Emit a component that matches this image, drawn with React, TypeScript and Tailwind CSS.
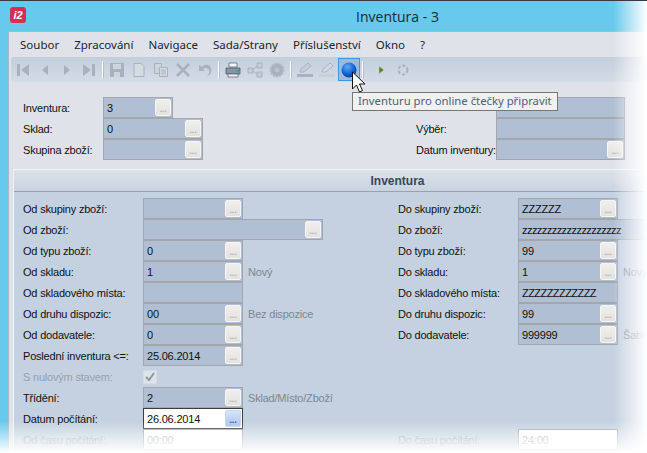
const menu = ["Soubor", "Zpracování", "Navigace", "Sada/Strany", "Příslušenství", "Okno", "?"];

type FieldProps = {
  value?: string;
  width: number;
  button?: boolean;
  white?: boolean;
  focused?: boolean;
  tight?: boolean;
};

function Field({ value = "", width, button = true, white, focused, tight }: FieldProps) {
  const fill = white ? "bg-white" : "bg-[#b0bfd3]";
  const edge = focused ? "border-[#3c3c3c]" : "border-[#a3a7ab]";
  return (
    <div style={{ width }} className={`flex h-[21px] shrink-0 border ${edge} ${fill}`}>
      <span className={`flex-1 overflow-hidden whitespace-nowrap pl-[3px] leading-[20px] ${tight ? "tracking-[-0.55px]" : ""} ${white && !focused ? "text-[#a9b0b9]" : "text-[#111]"}`}>
        {value}
      </span>
      {button && (
        <span
          className={`m-px flex w-[16px] items-end justify-center rounded-[2px] border pb-[1px] text-[9px] font-bold leading-[10px] ${
            focused
              ? "border-[#c6d5f0] bg-linear-to-b from-[#d8e4f8] to-[#a9c3ee] text-[#2a4f9a]"
              : "border-[#f6f6f4] bg-linear-to-b from-[#f0efed] to-[#e4e2de] text-[#b4b4b2]"
          }`}
        >
          ...
        </span>
      )}
    </div>
  );
}

type RowProps = FieldProps & {
  label?: string;
  labelWidth: number;
  note?: string;
  muted?: boolean;
};

function Row({ label, labelWidth, note, muted, ...field }: RowProps) {
  return (
    <div className="flex h-[21px] items-center">
      <span style={{ width: labelWidth }} className={`shrink-0 whitespace-nowrap pt-[2px] ${muted ? "text-[#97a1ad]" : "text-[#111]"}`}>
        {label}
      </span>
      <Field {...field} />
      {note && <span className="ml-[5px] whitespace-nowrap pt-[2px] text-[#7f8791]">{note}</span>}
    </div>
  );
}

function Sep() {
  return <span className="mx-[2px] h-[18px] w-[2px] shrink-0 border-l border-white bg-[#b7c1cd]" />;
}

function Tool({ children, active }: { children?: React.ReactNode; active?: boolean }) {
  return (
    <span
      className={`flex h-[23px] w-[22px] shrink-0 items-center justify-center ${
        active ? "border border-[#3d95e6] bg-[#9fb9d6]" : ""
      }`}
    >
      {children}
    </span>
  );
}

const g = "#a8b1bc";

function Icon({ children }: { children: React.ReactNode }) {
  return (
    <svg width="16" height="16" viewBox="0 0 16 16" fill="none">
      {children}
    </svg>
  );
}

const toolbar = (
  <>
    <Tool><Icon><path d="M2 2h3v12H2zM14 2v12L6 8z" fill={g} /></Icon></Tool>
    <Tool><Icon><path d="M11 3v10L5 8z" fill={g} /></Icon></Tool>
    <Tool><Icon><path d="M5 3v10l6-5z" fill={g} /></Icon></Tool>
    <Tool><Icon><path d="M11 2h3v12h-3zM2 2v12l8-6z" fill={g} /></Icon></Tool>
    <Sep />
    <Tool><Icon><path d="M1 1h14v14H1z" fill={g} /><path d="M4 2h8v5H4z" fill="#cdd4dc" /><path d="M5 10h6v5H5z" fill="#cdd4dc" /></Icon></Tool>
    <Tool><Icon><path d="M3 1.500h7l3 3v10H3z" fill="#d5dbe2" stroke={g} /></Icon></Tool>
    <Tool><Icon><path d="M1.500 1.500h7v10h-7z" fill="#cdd4dc" stroke={g} /><path d="M6.500 5.500h8v9h-8z" fill="#d5dbe2" stroke={g} /><path d="M8 8h5M8 10h5M8 12h5" stroke={g} /></Icon></Tool>
    <Tool><Icon><path d="M2 2l12 12M14 2L2 14" stroke={g} strokeWidth="2.500" /></Icon></Tool>
    <Tool><Icon><path d="M2 3v6h6L6 7c2-2 5-1 6 1 1 2 0 4-2 6 4-1 5-5 4-8-2-4-6-4-9-1z" fill={g} /></Icon></Tool>
    <Sep />
    <Tool>
      <Icon>
        <path d="M4 1h8v4H4z" fill="#f4f6f8" stroke="#5d6a78" strokeWidth="0.800" />
        <path d="M1 6h14v6H1z" fill="#8895a5" stroke="#4d5a68" strokeWidth="0.800" />
        <path d="M3 12h10v3H3z" fill="#eef1f4" stroke="#5d6a78" strokeWidth="0.800" />
        <path d="M11 8h3v2h-3z" fill="#22c04a" />
      </Icon>
    </Tool>
    <Tool>
      <Icon>
        <path d="M1 6h5v5H1zM10 1h5v5h-5zM10 10h5v5h-5z" fill="#c5ccd5" stroke={g} />
        <path d="M6 8l4-4M6 9l4 3" stroke={g} />
      </Icon>
    </Tool>
    <Tool>
      <Icon>
        <circle cx="8" cy="8" r="6.500" fill={g} stroke="#b3bbc6" strokeWidth="2" strokeDasharray="2 1" />
        <circle cx="8" cy="8" r="2.500" fill="#b9c1cb" />
      </Icon>
    </Tool>
    <Sep />
    <Tool>
      <Icon>
        <path d="M0 12h16v3H0z" fill={g} />
        <path d="M3 10l1-3 7-6 3 3-7 6z" fill="#c7ced7" stroke={g} />
      </Icon>
    </Tool>
    <Tool>
      <Icon>
        <path d="M0 12h16v3H0z" fill="#c8d0da" />
        <path d="M3 10l1-3 7-6 3 3-7 6z" fill="#d3d9e0" stroke={g} />
      </Icon>
    </Tool>
    <Tool active>
      <svg width="16" height="16" viewBox="0 0 16 16">
        <defs>
          <radialGradient id="ball" cx="0.400" cy="0.300" r="0.800">
            <stop offset="0" stopColor="#5ea9f5" />
            <stop offset="0.600" stopColor="#0f5fd0" />
            <stop offset="1" stopColor="#0a2f80" />
          </radialGradient>
        </defs>
        <circle cx="8" cy="8" r="7.500" fill="url(#ball)" />
      </svg>
    </Tool>
    <Sep />
    <span className="w-[4px] shrink-0" />
    <Tool><Icon><path d="M6 4v8l5-4z" fill="#55803a" stroke="#c2d6ac" strokeWidth="0.600" /></Icon></Tool>
    <Tool>
      <Icon>
        <circle cx="8" cy="8" r="4.500" stroke={g} strokeWidth="2" strokeDasharray="3 2" />
      </Icon>
    </Tool>
  </>
);

export default function App() {
  return (
    <div className="relative h-[453px] w-[647px] overflow-hidden border-t border-[#353b40] bg-[#67c9ec] font-['Liberation_Sans',sans-serif] text-[11px] tracking-[-0.2px]">
      {/* Title bar */}
      <div className="relative flex h-[30px] items-center justify-center pl-[148px] tracking-normal">
        <span className="absolute left-[10px] top-[6px] flex h-[16px] w-[16px] items-center justify-center rounded-[3px] bg-[#d4304f] text-[11px] font-bold italic leading-none text-white">
          i2
        </span>
        <span className="font-['Open_Sans',sans-serif] text-[14px] text-[#1b2a33]">Inventura - 3</span>
      </div>

      {/* Window client */}
      <div className="ml-[8px] h-[422px] border-t border-l border-[#a9b8c6] bg-[#dfe3e9]">
        <div className="flex h-[25px] items-center gap-[15px] pl-[11px] font-['Noto_Sans',sans-serif] text-[11.5px] tracking-normal text-[#1a2330]">
          {menu.map((m) => (
            <span key={m}>{m}</span>
          ))}
        </div>

        <div className="ml-[2px] flex h-[25px] items-center rounded-[3px] bg-linear-to-b from-[#c3cedc] to-[#d4dce5] pl-px">
          {toolbar}
        </div>

        {/* Document header */}
        <div className="flex pl-[14px] pt-[15px]">
          <div className="w-[393px]">
            <Row label="Inventura:" labelWidth={80} value="3" width={70} />
            <Row label="Sklad:" labelWidth={80} value="0" width={100} />
            <Row label="Skupina zboží:" labelWidth={80} width={100} />
          </div>
          <div>
            <Row labelWidth={80} width={129} button={false} />
            <Row label="Výběr:" labelWidth={80} width={129} button={false} />
            <Row label="Datum inventury:" labelWidth={80} width={129} />
          </div>
        </div>

        {/* Inventura group */}
        <div className="ml-[4px] mt-[9px] w-[700px] border-l border-t border-[#f0f3f6] bg-[#c4d1e0] pb-[40px]">
          <div className="flex h-[22px] items-center justify-center border-b border-[#98a2ad] bg-linear-to-b from-[#dce2ea] to-[#c9d3e0] pl-[68px] text-[12px] font-bold tracking-normal text-[#39475a]">
            Inventura
          </div>
          <div className="flex pl-[9px] pt-[6px]">
            <div className="w-[375px]">
              <Row label="Od skupiny zboží:" labelWidth={120} width={100} />
              <Row label="Od zboží:" labelWidth={120} width={180} />
              <Row label="Od typu zboží:" labelWidth={120} value="0" width={100} />
              <Row label="Od skladu:" labelWidth={120} value="1" width={100} note="Nový" />
              <Row label="Od skladového místa:" labelWidth={120} width={100} button={false} />
              <Row label="Od druhu dispozic:" labelWidth={120} value="00" width={100} note="Bez dispozice" />
              <Row label="Od dodavatele:" labelWidth={120} value="0" width={100} />
              <Row label="Poslední inventura <=:" labelWidth={120} value="25.06.2014" width={100} />
              <div className="flex h-[21px] items-center">
                <span className="w-[120px] pt-[2px] text-[#97a1ad]">S nulovým stavem:</span>
                <span className="flex h-[14px] w-[14px] items-center justify-center border border-[#d5dbe2] bg-[#dde3ea]">
                  <svg width="12" height="12" viewBox="0 0 12 12" fill="none">
                    <path d="M2 6l3 3 5-7" stroke="#8f979f" strokeWidth="2" />
                  </svg>
                </span>
              </div>
              <Row label="Třídění:" labelWidth={120} value="2" width={100} note="Sklad/Místo/Zboží" />
              <Row label="Datum počítání:" labelWidth={120} value="26.06.2014" width={100} white focused />
              <Row label="Od času počítání:" labelWidth={120} value="00:00" width={100} white button={false} muted />
            </div>
            <div>
              <Row label="Do skupiny zboží:" labelWidth={120} value="ZZZZZZ" width={100} />
              <Row label="Do zboží:" labelWidth={120} value="zzzzzzzzzzzzzzzzzzzz" width={180} tight />
              <Row label="Do typu zboží:" labelWidth={120} value="99" width={100} />
              <Row label="Do skladu:" labelWidth={120} value="1" width={100} note="Nový" />
              <Row label="Do skladového místa:" labelWidth={120} value="ZZZZZZZZZZZZ" width={100} button={false} tight />
              <Row label="Do druhu dispozic:" labelWidth={120} value="99" width={100} />
              <Row label="Do dodavatele:" labelWidth={120} value="999999" width={100} note="Šablona" />
              <div className="h-[84px]" />
              <Row label="Do času počítání:" labelWidth={120} value="24:00" width={100} white button={false} muted />
            </div>
          </div>
        </div>
      </div>

      {/* Torn screenshot edges */}
      <div className="absolute inset-y-0 right-0 w-[34px] bg-linear-to-r from-transparent to-white" />
      <div className="absolute inset-x-0 bottom-0 h-[32px] bg-linear-to-b from-transparent to-white" />

      {/* Tooltip and pointer */}
      <div className="absolute left-[352px] top-[91px] flex h-[19px] w-[206px] items-center whitespace-nowrap border border-[#767676] bg-[#f1f1f1] pl-[5px] font-['Noto_Sans',sans-serif] text-[11.3px] tracking-normal text-[#4d5f78]">
        Inventuru pro online čtečky připravit
      </div>
      <svg className="absolute left-[351px] top-[70px]" width="16" height="23" viewBox="0 0 16 23">
        <path d="M1.500 1v17l4-4 3 7 3-1.500-3-6.500h5.500z" fill="#fff" stroke="#111" />
      </svg>
    </div>
  );
}
